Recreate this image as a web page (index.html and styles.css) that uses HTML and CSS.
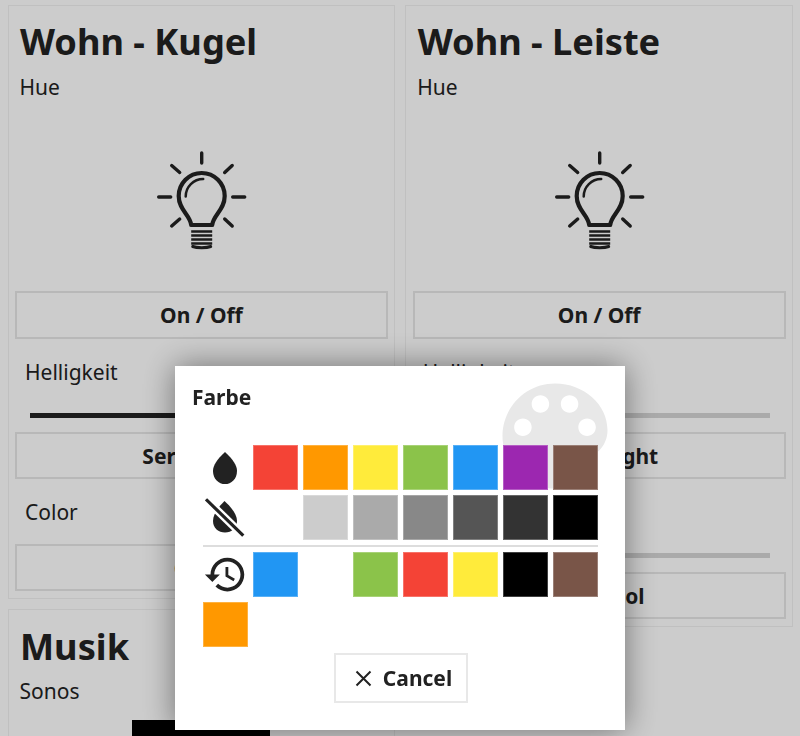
FILE: index.html
```html
<!DOCTYPE html>
<html lang="de">
<head>
    <meta charset="UTF-8">
    <meta name="viewport" content="width=device-width, initial-scale=1.0">
    <title>Farbe</title>
    <link rel="stylesheet" href="styles.css">
</head>
<body>
    <svg class="defs" width="0" height="0">
        <symbol id="bulb" viewBox="-0.700 0 100 100">
            <g fill="none" stroke="#222" stroke-linecap="round" stroke-linejoin="round">
                <path stroke-width="3.400" d="M50 3v10M7 47h12M81 47h12M20 15.500l8 7M80.500 15.500l-7.500 7M20 76l8-7M80.500 76l-7.500-7"/>
                <path stroke-width="4.200" d="M39.500 75c-1-10-12.500-15-12.500-29a23 23 0 0 1 46 0c0 14-11.500 19-12.500 29z"/>
                <path stroke-width="2.500" d="M34 46.500a17.500 17.500 0 0 1 17.500-17.500"/>
                <path stroke-width="2.500" stroke-linecap="butt" d="M39.500 81.500h21M39.500 85.500h21M39.500 89.500h21M39.500 93.500h21"/>
                <path stroke-width="3" d="M41 96.500c4 1.500 14 1.500 18 0"/>
            </g>
        </symbol>
    </svg>

    <div class="page">
        <div class="column">
            <div class="card">
                <h2 class="card-title">Wohn - Kugel</h2>
                <p class="card-sub">Hue</p>
                <svg class="bulb"><use href="#bulb"/></svg>
                <button class="btn first">On / Off</button>
                <p class="label">Helligkeit</p>
                <div class="slider"><div class="slider-fill full"></div></div>
                <button class="btn">Servo Light</button>
                <p class="label">Color</p>
                <button class="btn after-label">Color</button>
            </div>
            <div class="card musik">
                <h2 class="card-title">Musik</h2>
                <p class="card-sub">Sonos</p>
                <div class="cover"></div>
            </div>
        </div>
        <div class="column">
            <div class="card">
                <h2 class="card-title">Wohn - Leiste</h2>
                <p class="card-sub">Hue</p>
                <svg class="bulb"><use href="#bulb"/></svg>
                <button class="btn first">On / Off</button>
                <p class="label">Helligkeit</p>
                <div class="slider"></div>
                <button class="btn">Servo Light</button>
                <p class="label">Color</p>
                <div class="slider"></div>
                <button class="btn">Hue Tool</button>
            </div>
        </div>
    </div>

    <div class="overlay">
        <div class="modal">
            <svg class="watermark" viewBox="0 0 24 24"><path d="M12 3c-4.970 0-9 4.030-9 9s4.030 9 9 9c.830 0 1.500-.670 1.500-1.500 0-.390-.150-.740-.390-1.010-.230-.260-.380-.610-.380-.990 0-.830.670-1.500 1.500-1.500H16c2.760 0 5-2.240 5-5 0-4.420-4.030-8-9-8zm-5.500 9c-.830 0-1.500-.670-1.500-1.500S5.670 9 6.500 9 8 9.670 8 10.500 7.330 12 6.500 12zm3-4C8.670 8 8 7.330 8 6.500S8.670 5 9.500 5s1.500.670 1.500 1.500S10.330 8 9.500 8zm5 0c-.830 0-1.500-.670-1.500-1.500S13.670 5 14.500 5s1.500.670 1.500 1.500S15.330 8 14.500 8zm3 4c-.830 0-1.500-.670-1.500-1.500S16.670 9 17.500 9s1.500.670 1.500 1.500-.670 1.500-1.500 1.500z"/></svg>
            <h3 class="modal-title">Farbe</h3>
            <div class="swatches">
                <div class="swatch-icon">
                    <svg width="24" height="32" viewBox="4 2 16 20" preserveAspectRatio="none"><path d="M12 2c-5.330 4.550-8 8.480-8 11.800 0 4.980 3.800 8.200 8 8.200s8-3.220 8-8.200c0-3.320-2.670-7.250-8-11.800z"/></svg>
                </div>
                <div class="swatch red"></div>
                <div class="swatch orange"></div>
                <div class="swatch yellow"></div>
                <div class="swatch green"></div>
                <div class="swatch blue"></div>
                <div class="swatch purple"></div>
                <div class="swatch brown"></div>

                <div class="swatch-icon">
                    <svg width="40" height="41" viewBox="0 0 40 41">
                        <path d="M19.500 4c-6 6-11.500 13-11.500 20 0 7 5.500 11.500 12 11.500S32 31 32 24c0-7-6-14-12.500-20z"/>
                        <path d="M1 2.300l37.300 36.400" stroke="#fff" stroke-width="8"/>
                        <path d="M1 2.300l37.300 36.400" stroke="#222" stroke-width="3.200"/>
                    </svg>
                </div>
                <div class="swatch none"></div>
                <div class="swatch grey1"></div>
                <div class="swatch grey2"></div>
                <div class="swatch grey3"></div>
                <div class="swatch grey4"></div>
                <div class="swatch grey5"></div>
                <div class="swatch black"></div>

                <div class="divider"></div>

                <div class="swatch-icon">
                    <svg width="45" height="45" viewBox="0 0 24 24"><path d="M13 3c-4.970 0-9 4.030-9 9H1l3.890 3.890.07.140L9 12H6c0-3.870 3.130-7 7-7s7 3.130 7 7-3.130 7-7 7c-1.930 0-3.680-.790-4.940-2.060l-1.420 1.420C8.270 19.990 10.510 21 13 21c4.970 0 9-4.030 9-9s-4.030-9-9-9zm-1 5v5l4.280 2.540.720-1.210-3.500-2.080V8H12z"/></svg>
                </div>
                <div class="swatch blue"></div>
                <div class="swatch none"></div>
                <div class="swatch green"></div>
                <div class="swatch red"></div>
                <div class="swatch yellow"></div>
                <div class="swatch black"></div>
                <div class="swatch brown"></div>
                <div class="swatch orange"></div>
            </div>
            <div class="modal-actions">
                <button class="cancel">
                    <svg width="17" height="17" viewBox="0 0 17 17"><path d="M1.500 1.500l14 14M15.500 1.500l-14 14" fill="none" stroke="#222" stroke-width="2"/></svg>
                    Cancel
                </button>
            </div>
        </div>
    </div>
</body>
</html>
```

FILE: styles.css
```css
html, body {
    height: 100%;
    overflow: hidden;
}

body {
    margin: 0;
    background-color: #fff;
    color: #222;
    font-family: "Noto Sans", "Open Sans", sans-serif;
    font-size: 21px;
}

.defs {
    position: absolute;
}

.page {
    display: flex;
    align-items: flex-start;
    gap: 10px;
    padding: 5px 7px 0 7.500px;
}

.column {
    display: flex;
    flex-direction: column;
    gap: 9.500px;
    width: 388px;
}

.card {
    border: 1px solid #f0f0f0;
    padding: 10px 6.500px 7px;
}

.card-title {
    margin: 0 0 6.500px 5px;
    font-size: 36.200px;
    line-height: 50px;
    font-weight: 700;
}

.card-sub {
    margin: 0 0 0 4.500px;
    line-height: 28px;
}

.bulb {
    display: block;
    width: 100px;
    height: 100px;
    margin: 49.500px auto 41px;
}

.btn {
    display: block;
    width: 100%;
    height: 47px;
    margin-top: 14px;
    border: 2px solid #e6e6e6;
    background: #fff;
    color: #222;
    font-family: inherit;
    font-size: 21px;
    font-weight: 700;
}

.btn.first {
    height: 48px;
    margin-top: 0;
}

.btn.after-label {
    margin-top: 18px;
}

.label {
    margin: 19px 0 0 10px;
    line-height: 28px;
}

.slider {
    height: 5px;
    margin: 27px 16px 0 15px;
    background-color: #d5d5d5;
}

.slider-fill.full {
    height: 100%;
    background-color: #222;
}

.card.musik {
    padding-top: 11px;
    padding-bottom: 200px;
}

.cover {
    width: 138px;
    height: 138px;
    margin: 15px auto 0;
    background-color: #000;
}

.overlay {
    position: fixed;
    top: 0;
    left: 0;
    right: 0;
    bottom: 0;
    background-color: rgba(0, 0, 0, 0.2);
    display: flex;
    justify-content: center;
    align-items: flex-start;
    padding-top: 366px;
}

.modal {
    position: relative;
    width: 450px;
    height: 364px;
    box-sizing: border-box;
    padding: 17px 22px 0 27.500px;
    background-color: #fff;
    box-shadow: 0 0 30px rgba(0, 0, 0, 0.45);
}

.watermark {
    position: absolute;
    top: 0;
    right: 0;
    width: 140px;
    height: 140px;
    fill: #e8e8e8;
}

.modal-title {
    position: relative;
    margin: 0 0 33px -10.500px;
    font-size: 21px;
    line-height: 29px;
    font-weight: 700;
}

.swatches {
    position: relative;
    display: flex;
    flex-wrap: wrap;
}

.swatch,
.swatch-icon {
    width: 45px;
    height: 45px;
    margin: 0 5px 5px 0;
}

.swatch-icon {
    display: flex;
    align-items: center;
    justify-content: center;
    fill: #222;
}

.swatch-icon svg {
    flex: none;
}

.swatch {
    box-sizing: border-box;
    border: 1px solid rgba(255, 255, 255, 0.25);
}

.divider {
    width: 395px;
    height: 2px;
    margin-bottom: 5px;
    background-color: #ddd;
}

.red { background-color: #f44336; }
.orange { background-color: #ff9800; }
.yellow { background-color: #ffeb3b; }
.green { background-color: #8bc34a; }
.blue { background-color: #2196f3; }
.purple { background-color: #9c27b0; }
.brown { background-color: #795548; }
.none { background-color: transparent; border: none; }
.grey1 { background-color: #ccc; }
.grey2 { background-color: #aaa; }
.grey3 { background-color: #888; }
.grey4 { background-color: #555; }
.grey5 { background-color: #333; }
.black { background-color: #000; }

.modal-actions {
    display: flex;
    justify-content: center;
    margin: 1px 0 0 -3.500px;
}

.cancel {
    position: relative;
    display: flex;
    align-items: center;
    gap: 11px;
    height: 50px;
    padding: 0 14px 0 19px;
    border: 2px solid #e8e8e8;
    background: #fff;
    color: #222;
    font-family: inherit;
    font-size: 21px;
    font-weight: 700;
}
```
